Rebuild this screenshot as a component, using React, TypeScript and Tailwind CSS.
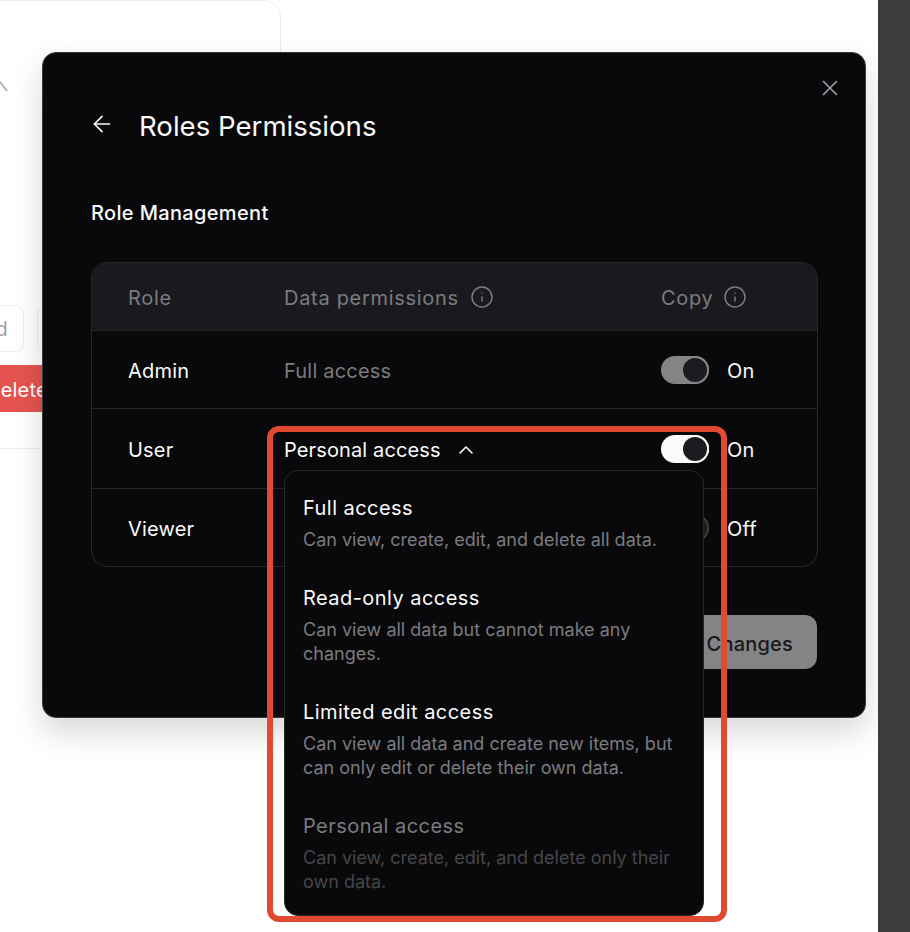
import { ArrowLeft, ChevronUp, Info, X } from "lucide-react";

const OPTIONS = [
  { title: "Full access", desc: ["Can view, create, edit, and delete all data."] },
  { title: "Read-only access", desc: ["Can view all data but cannot make any", "changes."] },
  { title: "Limited edit access", desc: ["Can view all data and create new items, but", "can only edit or delete their own data."] },
  { title: "Personal access", desc: ["Can view, create, edit, and delete only their", "own data."], muted: true },
];

function Toggle({ on, dim }: { on?: boolean; dim?: boolean }) {
  const track = dim ? "bg-[#848486]" : on ? "bg-[#fafafa]" : "bg-[#3a3a3d]";
  const ring = dim ? "border-[#848486]" : on ? "border-[#fafafa]" : "border-[#3a3a3d]";
  return (
    <span className={`flex h-[28px] w-[48px] shrink-0 items-center justify-end rounded-full ${track}`}>
      <span className={`h-[28px] w-[28px] rounded-full border-2 bg-[#1c1c20] ${ring}`} />
    </span>
  );
}

function Row({ role, perm, state, children, h }: { role: string; perm?: string; state: string; children: React.ReactNode; h: string }) {
  return (
    <div className={`flex items-center pl-[36px] ${h}`}>
      <div className="w-[156px] pt-[2px] text-[#fafafa]">{role}</div>
      <div className="w-[377px] pt-[2px] text-[#7b7b80]">{perm}</div>
      <div className="flex items-center gap-[18px]">
        {children}
        <span className="pt-[2px] text-[#fafafa]">{state}</span>
      </div>
    </div>
  );
}

export default function App() {
  return (
    <div className="relative flex h-[932px] w-[910px] overflow-hidden bg-white font-['Inter',sans-serif] text-[20px] tracking-[0.2px]">
      <div className="flex-1">
        <div className="-ml-[40px] flex h-[449px] w-[321px] flex-col rounded-[16px] border border-[#eeeeef] pb-[36px]">
          <svg className="ml-[39px] mt-[80px] text-[#9a9a9f]" width="8" height="11" viewBox="0 0 8 11" fill="none">
            <path d="M0 1 L7 10" stroke="currentColor" strokeWidth="1.3" />
          </svg>
          <div className="mt-auto flex gap-[13px]">
            <div className="flex h-[47px] w-[63px] items-center justify-end rounded-[8px] border border-[#eeeeef] pr-[15px] text-[#a1a1aa]">d</div>
            <div className="h-[47px] w-[60px] rounded-[8px] border border-[#eeeeef]" />
          </div>
          <div className="mt-[13px] flex h-[47px] w-[130px] items-center rounded-[8px] bg-[#e5534f] pl-[25px] pt-[2px] text-white">Delete</div>
        </div>
      </div>
      <div className="w-[32px] bg-[#3d3d3f]" />

      <div className="absolute left-[42px] top-[52px] h-[666px] w-[824px] rounded-[14px] border border-[#3a3a3d] bg-[#09090b] shadow-[0_14px_32px_rgba(0,0,0,0.16)]">
        <X className="absolute right-[22px] top-[22px] text-[#a1a1aa]" size={26} strokeWidth={1.4} />
        <div className="flex items-center pl-[46px] pt-[54px]">
          <ArrowLeft className="mb-[4px] text-[#fafafa]" size={26} strokeWidth={1.5} />
          <h1 className="ml-[24px] text-[27.6px] leading-[38px] tracking-normal text-[#fafafa]">Roles Permissions</h1>
        </div>
        <div className="ml-[48px] mt-[53px] font-medium tracking-[0.35px] text-[#fafafa]">Role Management</div>
        <div className="ml-[48px] mt-[34px] flex h-[305px] w-[727px] flex-col divide-y divide-[#27272a] overflow-hidden rounded-[16px] border border-[#27272a]">
          <div className="flex h-[68px] items-center bg-[#1a1a1e] pl-[36px] tracking-[0.7px] text-[#7b7b80]">
            <div className="w-[156px] pt-[2px]">Role</div>
            <div className="flex w-[377px] items-center gap-[11px]">
              <span className="pt-[2px]">Data permissions</span> <Info size={24} strokeWidth={1.5} />
            </div>
            <div className="flex items-center gap-[9px]">
              <span className="pt-[2px]">Copy</span> <Info size={24} strokeWidth={1.5} />
            </div>
          </div>
          <Row role="Admin" perm="Full access" state="On" h="h-[78px]"><Toggle dim /></Row>
          <Row role="User" state="On" h="h-[80px]"><Toggle on /></Row>
          <Row role="Viewer" state="Off" h="flex-1"><Toggle /></Row>
        </div>
        <div className="absolute bottom-[48px] right-[48px] flex h-[54px] w-[240px] items-center justify-end rounded-[12px] bg-[#848486] pr-[24px] pt-[3px] font-medium text-[#18181b]">
          Save Changes
        </div>
      </div>

      <div className="absolute left-[284px] top-[435px] flex items-center gap-[13px] tracking-[0.13px] text-[#fafafa]">
        Personal access <ChevronUp size={24} strokeWidth={1.6} />
      </div>

      <div className="absolute left-[284px] top-[470px] flex h-[446px] w-[420px] flex-col gap-[31px] rounded-[14px] border border-[#27272a] bg-[#09090b] px-[18px] pt-[22px]">
        {OPTIONS.map(o => (
          <div key={o.title}>
            <div className={`text-[20px] leading-[30px] tracking-[0.45px] ${o.muted ? "text-[#7b7b80]" : "text-[#fafafa]"}`}>{o.title}</div>
            <div className={`mt-[5px] text-[18px] leading-[24px] tracking-normal ${o.muted ? "text-[#46464a]" : "text-[#7b7b80]"}`}>
              {o.desc.map(l => <div key={l}>{l}</div>)}
            </div>
          </div>
        ))}
      </div>

      <div className="pointer-events-none absolute left-[267px] top-[426px] h-[496px] w-[460px] rounded-[12px] border-[6px] border-[#e04a30]" />
    </div>
  );
}
